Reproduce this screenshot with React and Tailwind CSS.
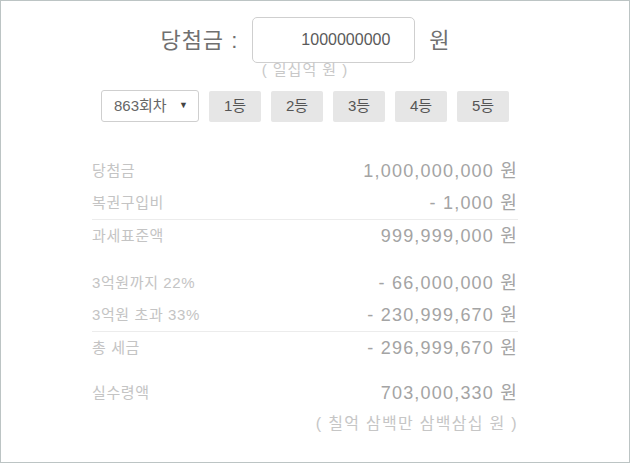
import React from "react";

const font = { fontFamily: '"Liberation Sans", "Noto Sans CJK KR", sans-serif' };

function Row({ label, value, border }) {
  return (
    <div className={"flex items-center justify-between " + (border ? "h-[33px] border-b border-[#ececec]" : "h-[32px]")}>
      <span className="text-[15px] tracking-[0.6px] text-[#c4c4c4]">{label}</span>
      <span className="text-[18px] tracking-[1.2px] text-[#a4a4a4]">{value} 원</span>
    </div>
  );
}

export default function App() {
  return (
    <div style={font} className="w-[630px] h-[463px] border border-[#bcc4c4] bg-white overflow-hidden">
      <div className="ml-[91px] w-[426px]">
        <div className="mt-[16px] flex h-[46px] items-center justify-center">
          <span className="text-[22px] text-[#707070] tracking-[1px]">당첨금 :</span>
          <div className="ml-[14px] flex h-[46px] w-[163px] items-center justify-end rounded-[5px] border border-[#cfcfcf] pr-[24px] text-[16px] text-[#5a5a5a]">
            1000000000
          </div>
          <span className="ml-[14px] text-[22px] text-[#707070]">원</span>
        </div>
        <div className="flex h-[15px] items-center justify-center text-[15px] tracking-[1px] text-[#c8c8c8]">
          ( 일십억 원 )
        </div>
        <div className="mt-[12px] flex h-[32px] items-center justify-center gap-[10px]">
          <div className="flex h-[32px] w-[98px] items-center justify-between rounded-[3px] border border-[#cfcfcf] pl-[12px] pr-[10px] text-[15px] text-[#666]">
            <span>863회차</span>
            <span className="text-[9px] text-[#444]">▼</span>
          </div>
          {["1등", "2등", "3등", "4등", "5등"].map((t) => (
            <div key={t} className="flex h-[31px] w-[52px] items-center justify-center rounded-[2px] bg-[#e6e6e6] text-[15px] text-[#555]">
              {t}
            </div>
          ))}
        </div>
        <div className="mt-[33px]">
          <Row label="당첨금" value="1,000,000,000" />
          <Row label="복권구입비" value="- 1,000" border />
          <Row label="과세표준액" value="999,999,000" />
          <div className="mt-[15px]">
            <Row label="3억원까지 22%" value="- 66,000,000" />
            <Row label="3억원 초과 33%" value="- 230,999,670" border />
            <Row label="총 세금" value="- 296,999,670" />
          </div>
          <div className="mt-[13px]">
            <Row label="실수령액" value="703,000,330" />
            <div className="flex h-[30px] items-center justify-end text-[16px] tracking-[1.3px] text-[#c6c6c6]">
              ( 칠억 삼백만 삼백삼십 원 )
            </div>
          </div>
        </div>
      </div>
    </div>
  );
}
